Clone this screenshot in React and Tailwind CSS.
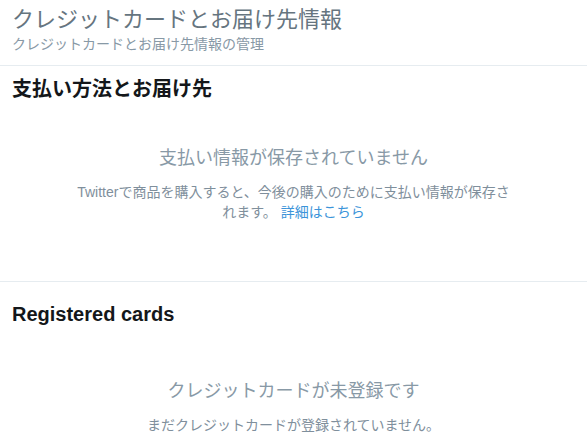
import React from 'react';

const font = { fontFamily: '"Liberation Sans", "Noto Sans CJK JP", sans-serif' };

function EmptyState({ title, children, className }) {
  return (
    <div className={`flex flex-col items-center text-center text-[#8899a6] ${className}`}>
      <h3 className="text-[18px] leading-6 font-normal">{title}</h3>
      <p className="w-[438px] text-[14px] leading-5 mt-3 text-[#7f8f9c]">{children}</p>
    </div>
  );
}

export default function App() {
  return (
    <div className="w-[587px] h-[444px] overflow-hidden bg-white" style={font}>
      {/* header */}
      <div className="px-3 pt-[6px] pb-[13px] border-b border-[#e6ecf0]">
        <h1 className="text-[22px] leading-7 text-[#66757f]">クレジットカードとお届け先情報</h1>
        <p className="text-[14px] leading-4 mt-[2px] text-[#8899a6]">クレジットカードとお届け先情報の管理</p>
      </div>

      {/* payment + shipping */}
      <section className="pt-[11px] pb-[59px] border-b border-[#e6ecf0]">
        <h2 className="px-3 text-[20px] leading-6 font-bold text-[#14171a]">支払い方法とお届け先</h2>
        <EmptyState title="支払い情報が保存されていません" className="mt-[45px]">
          Twitterで商品を購入すると、今後の購入のために支払い情報が保存されます。{' '}
          <a href="#" className="text-[#3b94d9]">詳細はこちら</a>
        </EmptyState>
      </section>

      {/* cards */}
      <section className="pt-5">
        <h2 className="px-3 text-[20px] leading-6 font-bold text-[#14171a]">Registered cards</h2>
        <EmptyState title="クレジットカードが未登録です" className="mt-[53px]">
          まだクレジットカードが登録されていません。
        </EmptyState>
      </section>
    </div>
  );
}
